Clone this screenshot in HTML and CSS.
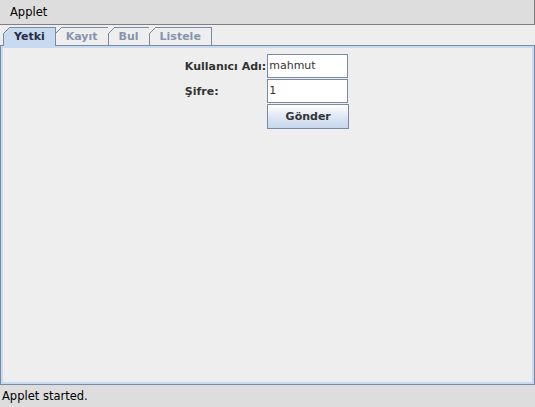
FILE: index.html
```html
<!DOCTYPE html>
<html lang="tr">
<head>
<meta charset="utf-8">
<title>Applet</title>
<link rel="stylesheet" href="styles.css">
</head>
<body>
<div class="app">
  <div class="titlebar">Applet</div>
  <div class="main">
    <div class="tabs">
      <div class="tab selected">Yetki</div>
      <div class="tab">Kayıt</div>
      <div class="tab">Bul</div>
      <div class="tab">Listele</div>
    </div>
    <div class="panel">
      <div class="form">
        <label class="label">Kullanıcı Adı:</label>
        <div class="field">mahmut</div>
        <label class="label">Şifre:</label>
        <div class="field">1</div>
        <span></span>
        <button class="btn">Gönder</button>
      </div>
    </div>
  </div>
  <div class="status">Applet started.</div>
</div>
</body>
</html>
```
FILE: styles.css
```css
* { box-sizing: border-box; }
html, body { margin: 0; padding: 0; }
body {
  width: 535px;
  height: 407px;
  overflow: hidden;
  font-family: "DejaVu Sans", sans-serif;
  background: #eeeeee;
}
.app { display: flex; flex-direction: column; width: 535px; height: 407px; }
.titlebar {
  height: 25px;
  background: #dddddd;
  border-bottom: 1px solid #808080;
  border-right: 1px solid #808080;
  padding-left: 10px;
  font-size: 11.5px;
  line-height: 24px;
  color: #000;
}
.main { background: #eeeeee; display: flex; flex-direction: column; }
.tabs {
  display: flex;
  height: 20px;
  padding: 2px 0 0 3px;
}
.tab {
  position: relative;
  height: 18px;
  padding: 0 10px 0 10px;
  margin-right: -1px;
  border: 1px solid #7a8aa5;
  border-bottom: none;
  background: #eeeeee;
  font-size: 11px;
  font-weight: bold;
  line-height: 17px;
  color: #8595ad;
}
.tab::before {
  content: "";
  position: absolute;
  top: -1px;
  left: -1px;
  width: 7px;
  height: 7px;
  background: linear-gradient(to bottom right, #eeeeee 0 calc(50% - 0.6px), #7a8aa5 calc(50% - 0.6px) calc(50% + 0.6px), transparent calc(50% + 0.6px));
}
.tab.selected {
  background: #c8daf0;
  color: #2b2b45;
  height: 19px;
  margin-bottom: -1px;
  z-index: 2;
}
.panel {
  height: 340px;
  border: 1px solid #7a8aa5;
  box-shadow: inset 0 0 0 2px #c8daf0;
  background: #eeeeee;
  padding-top: 8px;
  position: relative;
  z-index: 1;
}
.form {
  display: grid;
  grid-template-columns: auto 81px;
  column-gap: 1px;
  row-gap: 1px;
  justify-content: center;
  align-items: center;
  margin-left: -2px;
}
.label {
  font-size: 11px;
  font-weight: bold;
  color: #333333;
}
.field {
  height: 24px;
  background: #ffffff;
  border: 1px solid #7a8aa5;
  padding-left: 1px;
  font-size: 11px;
  line-height: 22px;
  color: #333333;
}
.btn {
  width: 82px;
  height: 25px;
  border: 1px solid #7a8aa5;
  background: linear-gradient(to bottom, #ffffff 0%, #e8eef7 35%, #c6d6ec 100%);
  font-family: "DejaVu Sans", sans-serif;
  font-size: 11px;
  font-weight: bold;
  color: #333333;
  padding: 0;
}
.status {
  flex: 1;
  background: #dddddd;
  padding-left: 2px;
  font-size: 11.5px;
  line-height: 22px;
  color: #000;
}
```
